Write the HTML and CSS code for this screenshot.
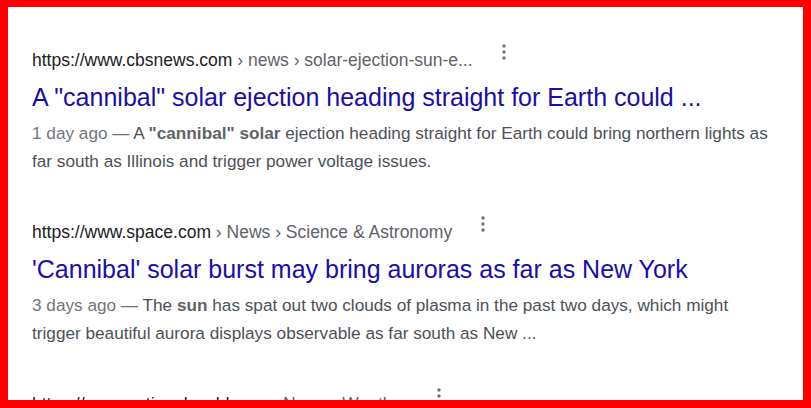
FILE: index.html
```html
<!DOCTYPE html>
<html lang="en">
<head>
<meta charset="utf-8">
<title>Search results</title>
<link rel="stylesheet" href="styles.css">
</head>
<body>
<div class="frame">
  <div class="results">
    <div class="result">
      <div class="url-row">
        <cite class="url"><span class="domain">https://www.cbsnews.com</span><span class="path"> › news › solar-ejection-sun-e...</span></cite>
        <svg class="dots" width="4" height="16" viewBox="0 0 4 16"><circle cx="2" cy="2" r="1.7"/><circle cx="2" cy="8" r="1.7"/><circle cx="2" cy="14" r="1.7"/></svg>
      </div>
      <h3 class="title">A "cannibal" solar ejection heading straight for Earth could ...</h3>
      <p class="snippet"><span class="date">1 day ago — </span>A <b>"cannibal" solar</b> ejection heading straight for Earth could bring northern lights as far south as Illinois and trigger power voltage issues.</p>
    </div>
    <div class="result">
      <div class="url-row">
        <cite class="url"><span class="domain">https://www.space.com</span><span class="path"> › News › Science &amp; Astronomy</span></cite>
        <svg class="dots" width="4" height="16" viewBox="0 0 4 16"><circle cx="2" cy="2" r="1.7"/><circle cx="2" cy="8" r="1.7"/><circle cx="2" cy="14" r="1.7"/></svg>
      </div>
      <h3 class="title">'Cannibal' solar burst may bring auroras as far as New York</h3>
      <p class="snippet"><span class="date">3 days ago — </span>The <b>sun</b> has spat out two clouds of plasma in the past two days, which might trigger beautiful aurora displays observable as far south as New ...</p>
    </div>
    <div class="result">
      <div class="url-row">
        <cite class="url"><span class="domain">https://www.nationalworld.com</span><span class="path"> › News › Weather</span></cite>
        <svg class="dots" width="4" height="16" viewBox="0 0 4 16"><circle cx="2" cy="2" r="1.7"/><circle cx="2" cy="8" r="1.7"/><circle cx="2" cy="14" r="1.7"/></svg>
      </div>
    </div>
  </div>
</div>
</body>
</html>
```
FILE: styles.css
```css
* { box-sizing: border-box; }
html, body {
  margin: 0;
  padding: 0;
  background: #fff;
}
.frame {
  width: 811px;
  height: 408px;
  border-style: solid;
  border-color: #ff0000;
  border-width: 7px 8px 8px 8px;
  overflow: hidden;
  background: #fff;
  font-family: "Liberation Sans", Arial, sans-serif;
}
.results {
  padding: 39px 0 0 24px;
  display: flex;
  flex-direction: column;
  gap: 43px;
}
.result {
  width: 745px;
  display: flex;
  flex-direction: column;
}
.url-row {
  display: flex;
  align-items: flex-start;
  height: 28px;
}
.url {
  font-style: normal;
  font-size: 17.5px;
  line-height: 28px;
  white-space: nowrap;
}
.domain { color: #202124; }
.path { color: #5f6368; }
.dots {
  fill: #70757a;
  margin-left: 29px;
  margin-top: -2px;
  flex: none;
}
.title {
  margin: 7px 0 0 0;
  font-weight: normal;
  font-size: 25px;
  line-height: 32px;
  color: #1a0dab;
  white-space: nowrap;
}
.snippet {
  margin: 6px 0 0 0;
  font-size: 17.2px;
  line-height: 28px;
  color: #4d5156;
}
.date { color: #70757a; }
.snippet b {
  color: #5f6368;
  font-weight: bold;
}
```
